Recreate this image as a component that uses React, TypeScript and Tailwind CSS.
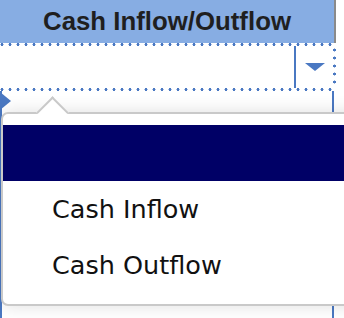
import React from "react"

const options = ["", "Cash Inflow", "Cash Outflow"]

function DotsH() {
  return (
    <div className="h-[3px] w-[336px] bg-[radial-gradient(circle,#4a78c2_1.3px,transparent_1.7px)] bg-[length:8px_3px] bg-repeat-x bg-[position:-2px_0]" />
  )
}

export default function App() {
  const selected = 0

  return (
    <div className="relative h-[318px] w-[344px] overflow-hidden bg-white">
      <div className="w-[336px]">
        {/* column header */}
        <div className="flex h-[43px] items-center justify-center border-r-2 border-[#8a8a8a] bg-[#87ade3] font-['Liberation_Sans',Arial,sans-serif] text-[25.8px] font-bold text-[#1f1f1f]">
          Cash Inflow/Outflow
        </div>
        <DotsH />

        {/* edit cell with dropdown button */}
        <div className="flex h-[42px]">
          <div className="flex-1" />
          <div className="flex w-[39px] items-center justify-center border-l-2 border-[#4a78c2]">
            <div className="h-0 w-0 border-x-[10px] border-t-[8px] border-x-transparent border-t-[#4a78c2]" />
          </div>
          <div className="w-[3px] bg-[radial-gradient(circle,#4a78c2_1.3px,transparent_1.7px)] bg-[length:3px_8px] bg-repeat-y" />
        </div>
        <DotsH />

        {/* next row */}
        <div className="relative h-[228px] w-[334px] border-x-2 border-[#4a78c2]">
          <div className="absolute -left-[2px] top-[1px] h-0 w-0 border-y-[9px] border-l-[11px] border-y-transparent border-l-[#4a78c2]" />
        </div>
      </div>

      {/* dropdown list */}
      <div className="absolute left-[1px] top-[112px] w-[420px] rounded-[7px] border-2 border-[#c9c9c9] bg-white py-[11px] shadow-[0_0_18px_rgba(0,0,0,0.13)]">
        <div className="absolute left-[38px] top-[-13px] h-[23px] w-[23px] rotate-45 border-l-2 border-t-2 border-[#c9c9c9] bg-white" />
        <div className="relative z-10">
          {options.map((opt, i) => (
            <div
              key={i}
              className={
                i === selected
                  ? "flex h-[56px] items-center bg-[#000066] pl-[49px]"
                  : "flex h-[56px] items-center pl-[49px] font-['DejaVu_Sans',Verdana,sans-serif] text-[25.5px] text-[#111]"
              }
            >
              {opt}
            </div>
          ))}
        </div>
      </div>
    </div>
  )
}
